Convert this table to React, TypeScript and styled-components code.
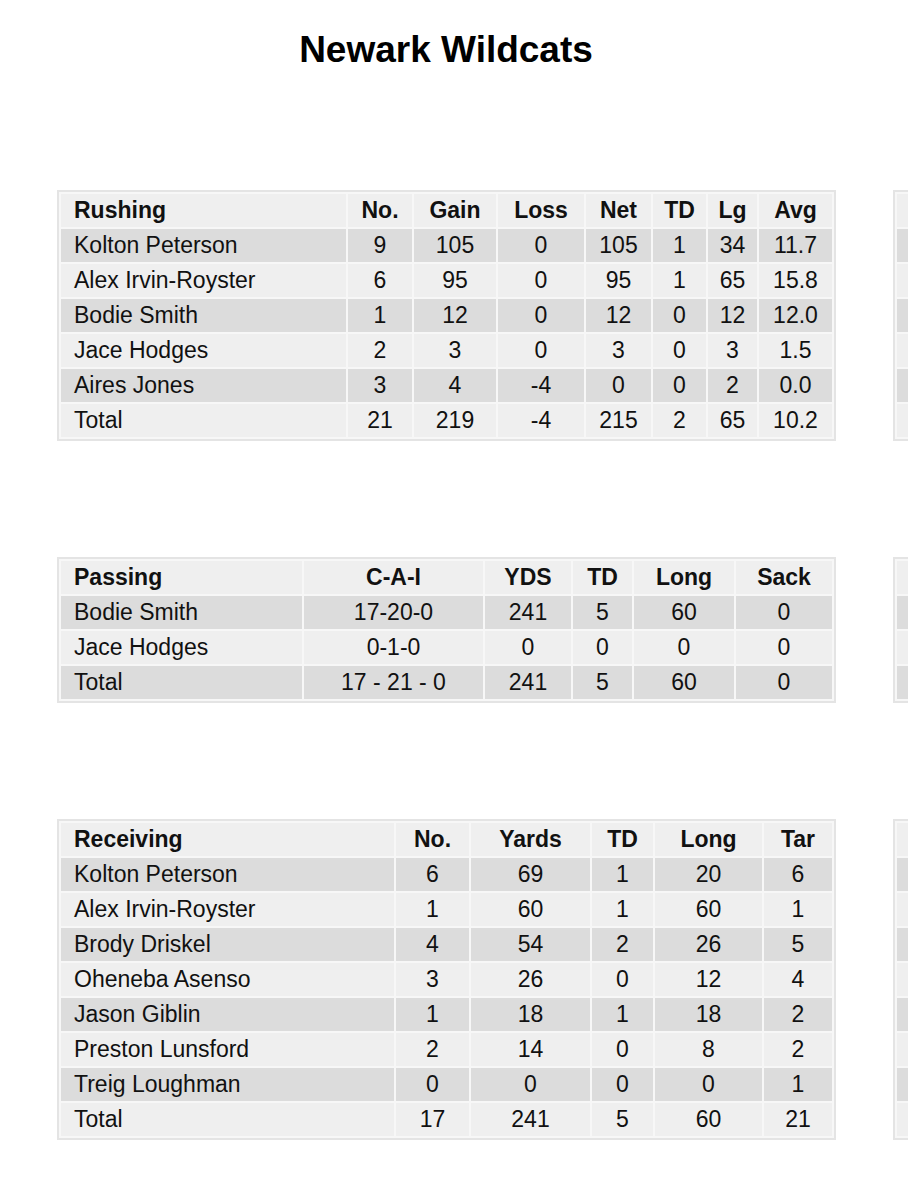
import React from "react";
import { createGlobalStyle, styled } from "styled-components";

type StatTable = {
  title: string;
  headers: string[];
  widths: number[];
  rows: (string | number)[][];
};

const rushing: StatTable = {
  title: "Rushing",
  headers: ["No.", "Gain", "Loss", "Net", "TD", "Lg", "Avg"],
  widths: [285, 64, 82, 86, 65, 53, 49, 73],
  rows: [
    ["Kolton Peterson", 9, 105, 0, 105, 1, 34, "11.7"],
    ["Alex Irvin-Royster", 6, 95, 0, 95, 1, 65, "15.8"],
    ["Bodie Smith", 1, 12, 0, 12, 0, 12, "12.0"],
    ["Jace Hodges", 2, 3, 0, 3, 0, 3, "1.5"],
    ["Aires Jones", 3, 4, -4, 0, 0, 2, "0.0"],
    ["Total", 21, 219, -4, 215, 2, 65, "10.2"],
  ],
};

const passing: StatTable = {
  title: "Passing",
  headers: ["C-A-I", "YDS", "TD", "Long", "Sack"],
  widths: [241, 179, 86, 59, 100, 96],
  rows: [
    ["Bodie Smith", "17-20-0", 241, 5, 60, 0],
    ["Jace Hodges", "0-1-0", 0, 0, 0, 0],
    ["Total", "17 - 21 - 0", 241, 5, 60, 0],
  ],
};

const receiving: StatTable = {
  title: "Receiving",
  headers: ["No.", "Yards", "TD", "Long", "Tar"],
  widths: [333, 73, 119, 61, 107, 68],
  rows: [
    ["Kolton Peterson", 6, 69, 1, 20, 6],
    ["Alex Irvin-Royster", 1, 60, 1, 60, 1],
    ["Brody Driskel", 4, 54, 2, 26, 5],
    ["Oheneba Asenso", 3, 26, 0, 12, 4],
    ["Jason Giblin", 1, 18, 1, 18, 2],
    ["Preston Lunsford", 2, 14, 0, 8, 2],
    ["Treig Loughman", 0, 0, 0, 0, 1],
    ["Total", 17, 241, 5, 60, 21],
  ],
};

// the opponent column sits off to the right and only its edge shows
const blank = (t: StatTable): StatTable => ({
  title: "",
  headers: t.headers.map(() => ""),
  widths: t.widths,
  rows: t.rows.map((r) => r.map(() => "")),
});

const sections = [rushing, passing, receiving];

const GlobalStyle = createGlobalStyle`
  html, body {
    margin: 0;
    padding: 0;
    background: #ffffff;
    overflow-x: hidden;
  }
  body {
    font-family: "Liberation Sans", Arial, sans-serif;
    color: #111111;
  }
`;

function StatsTable({ table }: { table: StatTable }) {
  return (
    <Table>
      <colgroup>
        {table.widths.map((w, i) => (
          <col key={i} style={{ width: w }} />
        ))}
      </colgroup>
      <thead>
        <tr>
          <HeadCell $first>{table.title}</HeadCell>
          {table.headers.map((h, i) => (
            <HeadCell key={i}>{h}</HeadCell>
          ))}
        </tr>
      </thead>
      <tbody>
        {table.rows.map((row, i) => (
          <Row key={i} $dark={i % 2 === 0}>
            {row.map((cell, j) => (
              <Cell key={j} $first={j === 0}>
                {cell}
              </Cell>
            ))}
          </Row>
        ))}
      </tbody>
    </Table>
  );
}

export default function App() {
  return (
    <Page>
      <GlobalStyle />
      <Title>Newark Wildcats</Title>
      <Sections>
        {sections.map((t) => (
          <SectionRow key={t.title}>
            <StatsTable table={t} />
            <StatsTable table={blank(t)} />
          </SectionRow>
        ))}
      </Sections>
    </Page>
  );
}

const Page = styled.div`
  padding: 29px 0 40px 57px;
  width: max-content;
`;

const Title = styled.h1`
  width: 778px;
  margin: 0 0 119px;
  font-size: 37px;
  line-height: 42px;
  font-weight: bold;
  text-align: center;
  color: #000000;
`;

const Sections = styled.div`
  display: flex;
  flex-direction: column;
  gap: 116px;
`;

const SectionRow = styled.div`
  display: flex;
  gap: 57px;
  align-items: flex-start;
`;

const Table = styled.table`
  width: 779px;
  box-sizing: border-box;
  table-layout: fixed;
  border-collapse: separate;
  border-spacing: 2px;
  border: 2px solid #e4e4e4;
  background: #f7f7f7;
  font-size: 23px;
`;

const HeadCell = styled.th<{ $first?: boolean }>`
  height: 33px;
  padding: 0 ${(p) => (p.$first ? "13px" : "4px")};
  background: #efefef;
  font-weight: bold;
  text-align: ${(p) => (p.$first ? "left" : "center")};
  white-space: nowrap;
  overflow: hidden;
  color: #111111;
`;

const Row = styled.tr<{ $dark: boolean }>`
  background: ${(p) => (p.$dark ? "#dcdcdc" : "#efefef")};
`;

const Cell = styled.td<{ $first?: boolean }>`
  height: 33px;
  padding: 0 ${(p) => (p.$first ? "13px" : "4px")};
  text-align: ${(p) => (p.$first ? "left" : "center")};
  white-space: nowrap;
  overflow: hidden;
`;
